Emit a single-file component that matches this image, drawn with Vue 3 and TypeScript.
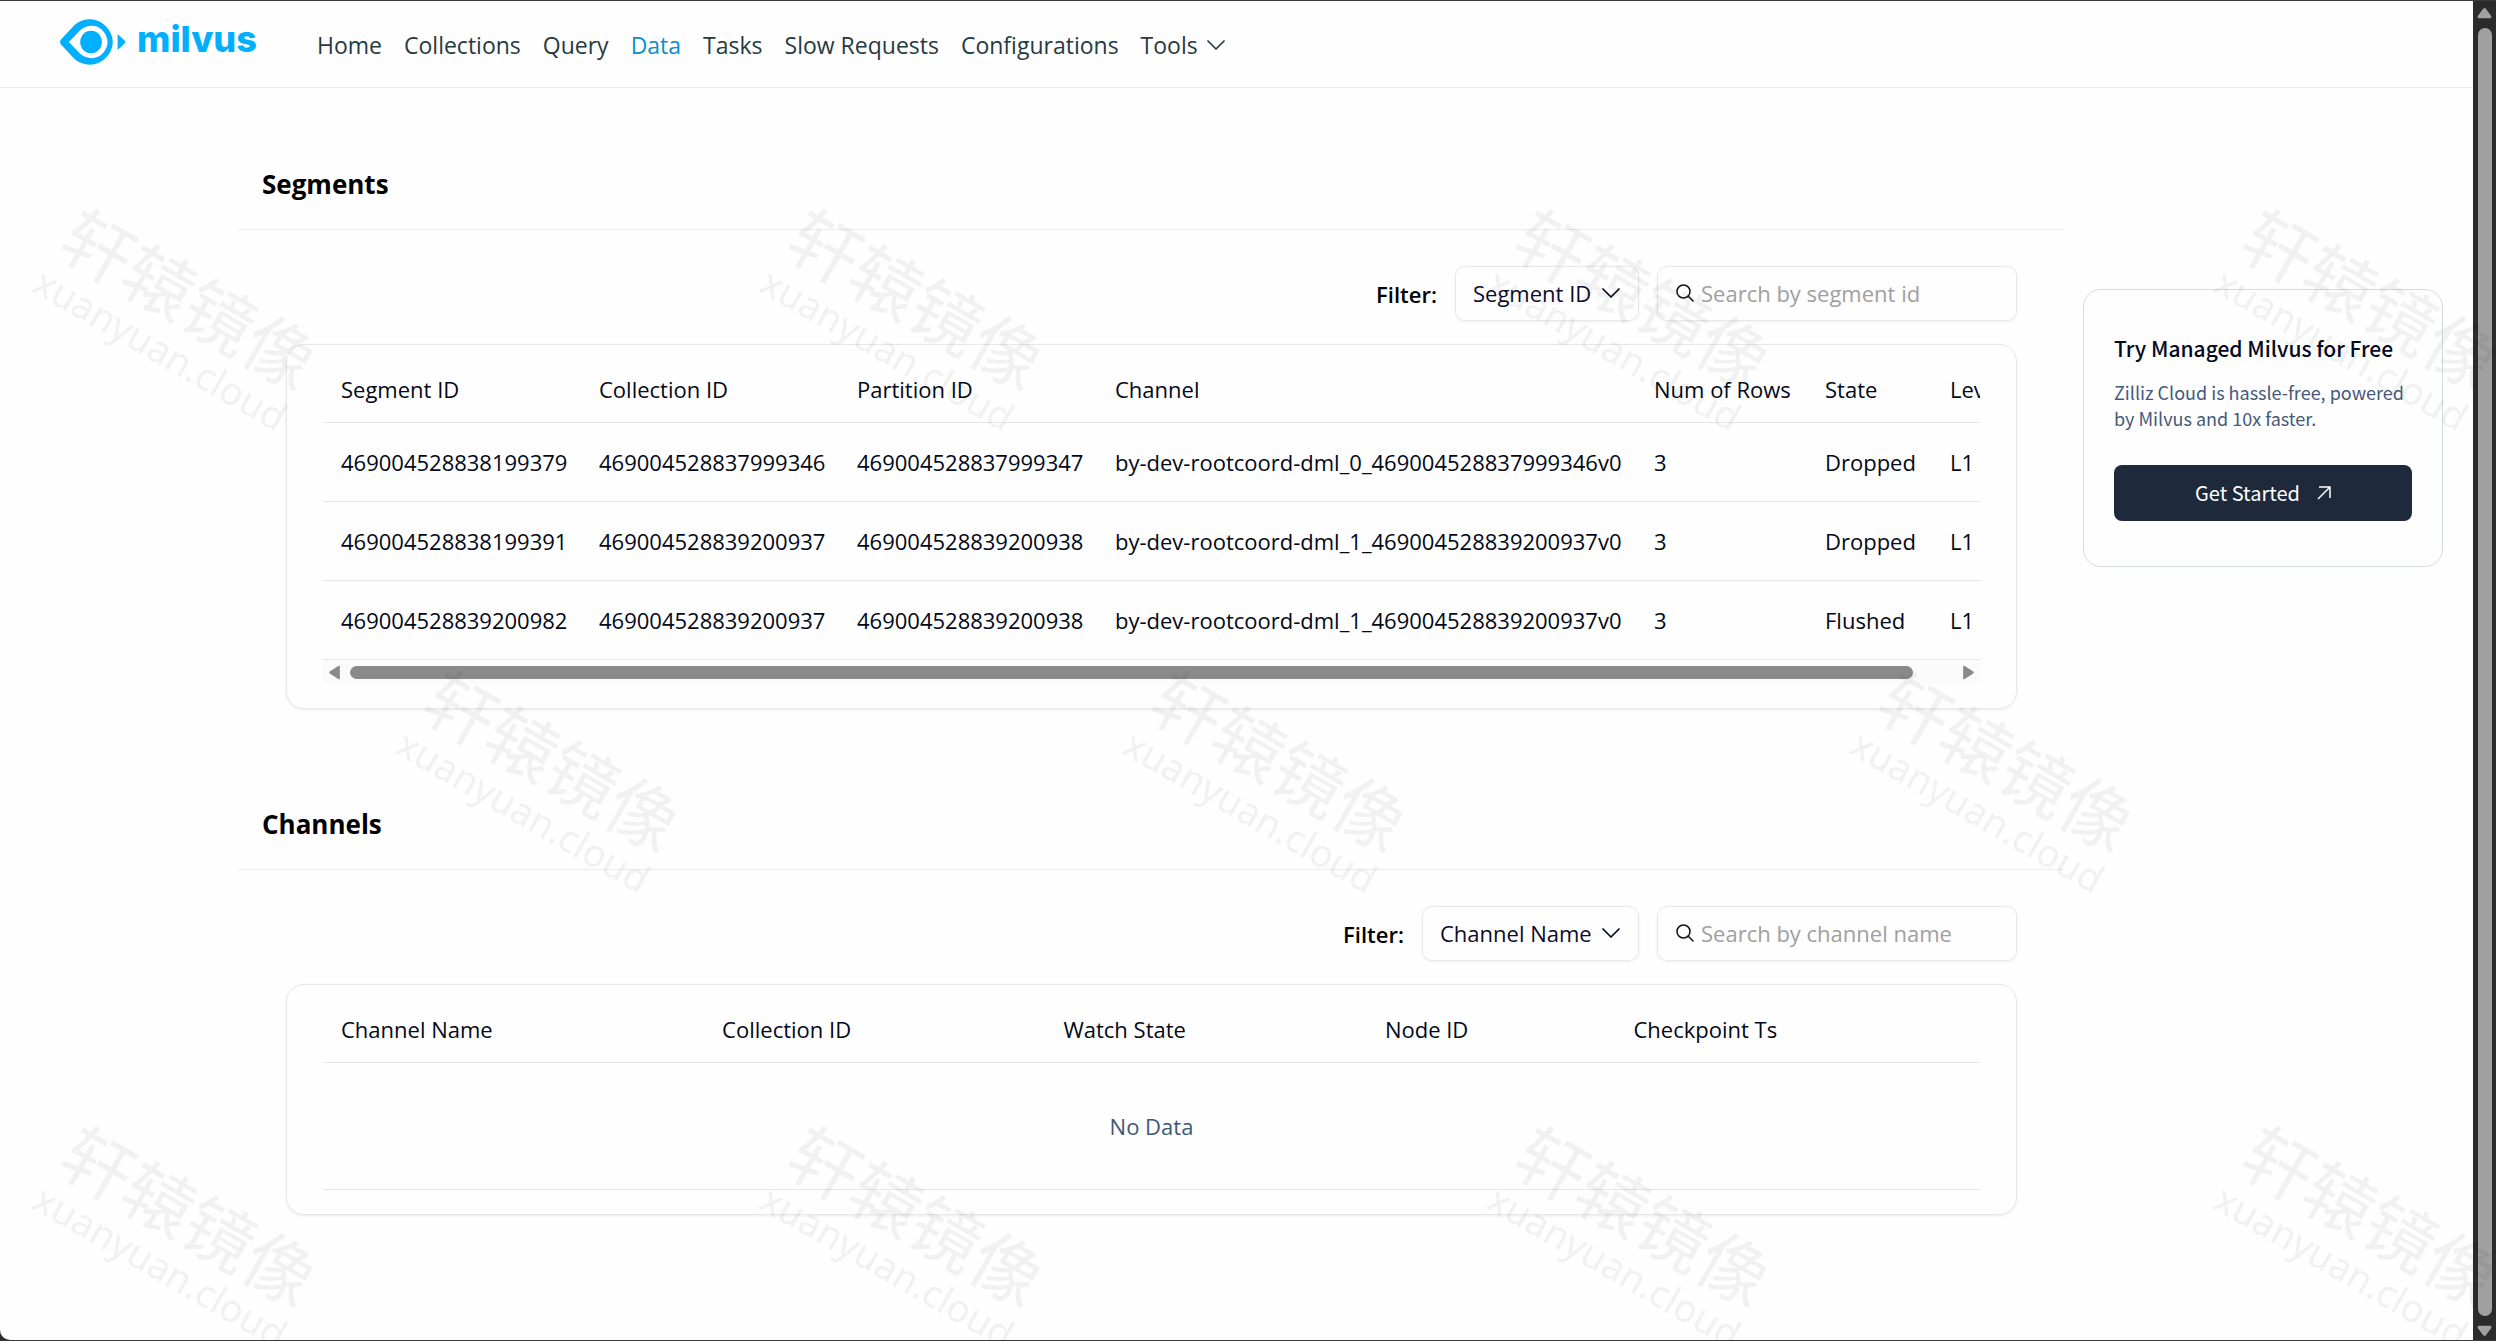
<script setup lang="ts">
interface NavItem {
  label: string
  active?: boolean
}

interface Segment {
  id: string
  collection: string
  partition: string
  channel: string
  rows: number
  state: string
  level: string
}

const navItems: NavItem[] = [
  { label: 'Home' },
  { label: 'Collections' },
  { label: 'Query' },
  { label: 'Data', active: true },
  { label: 'Tasks' },
  { label: 'Slow Requests' },
  { label: 'Configurations' },
]

const segmentColumns: string[] = [
  'Segment ID',
  'Collection ID',
  'Partition ID',
  'Channel',
  'Num of Rows',
  'State',
  'Level',
]

const segments: Segment[] = [
  {
    id: '469004528838199379',
    collection: '469004528837999346',
    partition: '469004528837999347',
    channel: 'by-dev-rootcoord-dml_0_469004528837999346v0',
    rows: 3,
    state: 'Dropped',
    level: 'L1',
  },
  {
    id: '469004528838199391',
    collection: '469004528839200937',
    partition: '469004528839200938',
    channel: 'by-dev-rootcoord-dml_1_469004528839200937v0',
    rows: 3,
    state: 'Dropped',
    level: 'L1',
  },
  {
    id: '469004528839200982',
    collection: '469004528839200937',
    partition: '469004528839200938',
    channel: 'by-dev-rootcoord-dml_1_469004528839200937v0',
    rows: 3,
    state: 'Flushed',
    level: 'L1',
  },
]

const channelColumns: string[] = [
  'Channel Name',
  'Collection ID',
  'Watch State',
  'Node ID',
  'Checkpoint Ts',
]
</script>

<template>
  <div class="window">
    <div class="page">
      <header class="topbar">
        <a class="logo" href="#">
          <svg class="logo-mark" viewBox="0 0 68 46" aria-hidden="true">
            <path
              fill="#00b0ff"
              fill-rule="evenodd"
              d="M1 20.500 L15 5.500 C25-2.500 38-1.500 46 6.500 C56 16 56 30 46 39.500 C38 47.500 25 48.500 15 40.500 L1 25.500 C-.3 24-.3 22 1 20.500 Z M9 23 L20 34.500 C27 41 37 41 43 35 C50 28 50 18 43 11 C37 5 27 5 20 11.500 Z"
            />
            <ellipse cx="31.500" cy="23" rx="11" ry="11.500" fill="#00b0ff" />
            <path d="M58.500 15 L66 22 Q67 23 66 24 L58.500 31 Z" fill="#00b0ff" />
          </svg>
          <span class="logo-text">milvus</span>
        </a>
        <nav class="nav">
          <a
            v-for="item in navItems"
            :key="item.label"
            href="#"
            class="nav-link"
            :class="{ active: item.active }"
            >{{ item.label }}</a
          >
          <button type="button" class="nav-link nav-menu">
            Tools
            <svg class="chevron" viewBox="0 0 18 10" aria-hidden="true">
              <path d="M1 1 L9 9 L17 1" />
            </svg>
          </button>
        </nav>
      </header>

      <div class="layout">
        <main class="main">
          <section class="section">
            <h2 class="section-title">Segments</h2>
            <div class="section-body">
              <div class="filters">
                <label class="filter-label" for="segment-field">Filter:</label>
                <div class="select-box">
                  <select id="segment-field">
                    <option>Segment ID</option>
                  </select>
                  <svg class="chevron" viewBox="0 0 18 10" aria-hidden="true">
                    <path d="M1 1 L9 9 L17 1" />
                  </svg>
                </div>
                <label class="search-box">
                  <svg class="search-icon" viewBox="0 0 18 18" aria-hidden="true">
                    <circle cx="7.500" cy="7.500" r="6.500" />
                    <path d="M12.300 12.300 L17 17" />
                  </svg>
                  <input type="text" placeholder="Search by segment id" />
                </label>
              </div>

              <div class="card">
                <div class="table-scroll">
                  <table class="table segments-table">
                    <colgroup>
                      <col class="w-id" />
                      <col class="w-id" />
                      <col class="w-id" />
                      <col class="w-channel" />
                      <col class="w-rows" />
                      <col class="w-state" />
                      <col class="w-level" />
                    </colgroup>
                    <thead>
                      <tr>
                        <th v-for="column in segmentColumns" :key="column" scope="col">
                          {{ column }}
                        </th>
                      </tr>
                    </thead>
                    <tbody>
                      <tr v-for="segment in segments" :key="segment.id">
                        <td>{{ segment.id }}</td>
                        <td>{{ segment.collection }}</td>
                        <td>{{ segment.partition }}</td>
                        <td>{{ segment.channel }}</td>
                        <td>{{ segment.rows }}</td>
                        <td>{{ segment.state }}</td>
                        <td>{{ segment.level }}</td>
                      </tr>
                    </tbody>
                  </table>
                </div>
                <div class="hscroll" aria-hidden="true">
                  <svg class="hscroll-arrow" viewBox="0 0 12 14">
                    <path d="M11 1.500 V12.500 Q11 14 9.500 13 L1.500 8 Q.5 7 1.500 6 L9.500 1 Q11 0 11 1.500 Z" />
                  </svg>
                  <div class="hscroll-track"><div class="hscroll-thumb"></div></div>
                  <svg class="hscroll-arrow" viewBox="0 0 12 14">
                    <path d="M1 1.500 V12.500 Q1 14 2.500 13 L10.500 8 Q11.500 7 10.500 6 L2.500 1 Q1 0 1 1.500 Z" />
                  </svg>
                </div>
              </div>
            </div>
          </section>

          <section class="section">
            <h2 class="section-title">Channels</h2>
            <div class="section-body">
              <div class="filters">
                <label class="filter-label" for="channel-field">Filter:</label>
                <div class="select-box">
                  <select id="channel-field">
                    <option>Channel Name</option>
                  </select>
                  <svg class="chevron" viewBox="0 0 18 10" aria-hidden="true">
                    <path d="M1 1 L9 9 L17 1" />
                  </svg>
                </div>
                <label class="search-box">
                  <svg class="search-icon" viewBox="0 0 18 18" aria-hidden="true">
                    <circle cx="7.500" cy="7.500" r="6.500" />
                    <path d="M12.300 12.300 L17 17" />
                  </svg>
                  <input type="text" placeholder="Search by channel name" />
                </label>
              </div>

              <div class="card">
                <table class="table channels-table">
                  <colgroup>
                    <col class="c-name" />
                    <col class="c-collection" />
                    <col class="c-watch" />
                    <col class="c-node" />
                    <col />
                  </colgroup>
                  <thead>
                    <tr>
                      <th v-for="column in channelColumns" :key="column" scope="col">
                        {{ column }}
                      </th>
                    </tr>
                  </thead>
                  <tbody>
                    <tr>
                      <td class="empty" :colspan="channelColumns.length">No Data</td>
                    </tr>
                  </tbody>
                </table>
              </div>
            </div>
          </section>
        </main>

        <aside class="promo">
          <h3 class="promo-title">Try Managed Milvus for Free</h3>
          <p class="promo-text">Zilliz Cloud is hassle-free, powered by Milvus and 10x faster.</p>
          <a class="promo-button" href="#">
            Get Started
            <svg class="arrow-icon" viewBox="0 0 14 14" aria-hidden="true">
              <path d="M1 13 L13 1 M2 1 H13 V12" />
            </svg>
          </a>
        </aside>
      </div>
    </div>

    <div class="vscroll" aria-hidden="true">
      <svg class="vscroll-arrow" viewBox="0 0 16 12">
        <path d="M6.500 1.500 Q8 0 9.500 1.500 L15 9 Q16 11.500 14 11.500 H2 Q0 11.500 1 9 Z" />
      </svg>
      <div class="vscroll-thumb"></div>
      <svg class="vscroll-arrow" viewBox="0 0 16 12">
        <path d="M6.500 10.500 Q8 12 9.500 10.500 L15 3 Q16 .5 14 .5 H2 Q0 .5 1 3 Z" />
      </svg>
    </div>

    <svg class="watermark" aria-hidden="true">
      <defs>
        <pattern id="stamp" width="727" height="917" patternUnits="userSpaceOnUse">
          <g transform="translate(189 299) rotate(30)">
            <text class="stamp-cjk" y="26">轩辕镜像</text>
            <text class="stamp-url" y="71">xuanyuan.cloud</text>
          </g>
          <g transform="translate(552 761) rotate(30)">
            <text class="stamp-cjk" y="26">轩辕镜像</text>
            <text class="stamp-url" y="71">xuanyuan.cloud</text>
          </g>
        </pattern>
      </defs>
      <rect width="100%" height="100%" fill="url(#stamp)" />
    </svg>
  </div>
</template>

<style>
body {
  margin: 0;
  background: #2b2b2b;
}
</style>

<style scoped>
.window {
  position: relative;
  display: flex;
  box-sizing: border-box;
  min-height: 100vh;
  border-top: 1px solid #3a383c;
  border-bottom: 1px solid #3a383c;
  background: #2b2b2b;
  color: #020817;
  font-family: 'Open Sans', 'Noto Sans', sans-serif;
  font-size: 22px;
  line-height: 32px;
  overflow: hidden;
}

.page {
  flex: 1;
  min-width: 0;
  background: #fefefe;
  border-bottom-left-radius: 10px;
}

.topbar {
  display: flex;
  align-items: center;
  box-sizing: border-box;
  height: 87px;
  padding: 0 60px;
  border-bottom: 1px solid #ebebeb;
}

.logo {
  display: flex;
  align-items: center;
  gap: 10px;
  width: 257px;
  height: 46px;
  margin-bottom: 4px;
  text-decoration: none;
}

.logo-mark {
  width: 67px;
  height: 46px;
}

.logo-text {
  margin-bottom: 6px;
  color: #00b0ff;
  font-family: Inter, 'Open Sans', sans-serif;
  font-size: 36px;
  font-weight: 800;
  line-height: 40px;
}

.nav {
  display: flex;
  align-items: center;
  gap: 22px;
  padding-top: 2px;
  font-size: 23px;
}

.nav-link {
  color: #263a3f;
  text-decoration: none;
  white-space: nowrap;
}

.nav-link.active {
  color: #0c8ec9;
}

.nav-menu {
  display: flex;
  align-items: center;
  gap: 9px;
  padding: 0;
  border: 0;
  background: none;
  font: inherit;
  line-height: 32px;
}

.chevron {
  width: 18px;
  height: 10px;
  flex: none;
  fill: none;
  stroke: currentColor;
  stroke-width: 1.700;
  stroke-linecap: round;
  stroke-linejoin: round;
}

.layout {
  display: flex;
  align-items: flex-start;
  gap: 20px;
  padding: 57px 30px 0 238px;
}

.main {
  flex: 1;
  min-width: 0;
}

.section {
  margin-bottom: 76px;
}

.section-title {
  box-sizing: border-box;
  height: 85px;
  margin: 0;
  padding: 19px 24px 25px;
  border-bottom: 1px solid #ebebeb;
  color: #000;
  font-size: 26px;
  font-weight: 700;
  line-height: 40px;
}

.section-body {
  padding: 36px 46px 0 48px;
}

.filters {
  display: flex;
  align-items: center;
  justify-content: flex-end;
  gap: 18px;
  height: 55px;
  margin-bottom: 23px;
}

.filter-label {
  color: #000;
  font-weight: 600;
}

.select-box,
.search-box {
  display: flex;
  align-items: center;
  box-sizing: border-box;
  height: 55px;
  padding-bottom: 2px;
  border: 1px solid #e5e8ea;
  border-radius: 10px;
  box-shadow: 0 1px 3px rgba(0, 0, 0, 0.06);
}

.select-box {
  gap: 10px;
  padding-right: 18px;
  padding-left: 17px;
}

.select-box select {
  padding: 0;
  border: 0;
  outline: 0;
  background: none;
  color: #0b0b2a;
  font: inherit;
  line-height: 32px;
  appearance: none;
}

.search-box {
  gap: 7px;
  width: 360px;
  padding-right: 18px;
  padding-left: 18px;
}

.search-icon {
  width: 18px;
  height: 18px;
  flex: none;
  fill: none;
  stroke: #111;
  stroke-width: 1.500;
  stroke-linecap: round;
}

.search-box input {
  flex: 1;
  min-width: 0;
  padding: 0;
  border: 0;
  outline: 0;
  background: none;
  font: inherit;
  line-height: 32px;
}

.search-box input::placeholder {
  color: #a0a0a0;
  opacity: 1;
}

.card {
  box-sizing: border-box;
  padding: 12px 36px 24px;
  border: 1px solid #e5e8ea;
  border-radius: 18px;
  box-shadow: 0 1px 3px rgba(0, 0, 0, 0.08);
}

.table-scroll {
  overflow: hidden;
}

.table {
  width: 100%;
  border-collapse: separate;
  border-spacing: 0;
  table-layout: fixed;
}

.table th,
.table td {
  box-sizing: border-box;
  height: 79px;
  padding: 0 18px 1px;
  border-bottom: 1px solid #e5e8ea;
  font-weight: 400;
  text-align: left;
  white-space: nowrap;
}

.table th {
  height: 66px;
}

.segments-table {
  width: 1770px;
}

.w-id {
  width: 258px;
}

.w-channel {
  width: 539px;
}

.w-rows {
  width: 171px;
}

.w-state {
  width: 125px;
}

.w-level {
  width: 161px;
}

.c-name {
  width: 23%;
}

.c-collection {
  width: 20.6%;
}

.c-watch {
  width: 19.4%;
}

.c-node {
  width: 15%;
}

.table .empty {
  height: 127px;
  color: #3f5873;
  text-align: center;
}

.hscroll {
  display: flex;
  align-items: center;
  gap: 9px;
  height: 24px;
  padding: 0 5px;
  background: #fbfbfb;
}

.hscroll-arrow {
  width: 13px;
  height: 15px;
  flex: none;
  fill: #8a8a8a;
}

.hscroll-track {
  flex: 1;
}

.hscroll-thumb {
  width: 97.5%;
  height: 13px;
  border-radius: 7px;
  background: #8a8a8a;
}

.promo {
  box-sizing: border-box;
  width: 360px;
  margin-top: 144px;
  padding: 41px 30px 45px;
  border: 1px solid #d5dadb;
  border-radius: 18px;
  font-family: 'Noto Sans CJK SC', sans-serif;
}

.promo-title {
  margin: 0 0 14px;
  color: #02081f;
  font-size: 21px;
  font-weight: 500;
  line-height: 34px;
}

.promo-text {
  margin: 0 0 34px;
  color: #45597a;
  font-size: 18px;
  line-height: 26px;
}

.promo-button {
  display: flex;
  align-items: center;
  justify-content: center;
  gap: 17px;
  height: 56px;
  border-radius: 8px;
  background: #1e293b;
  color: #fff;
  font-size: 20px;
  text-decoration: none;
}

.arrow-icon {
  width: 14px;
  height: 14px;
  fill: none;
  stroke: #fff;
  stroke-width: 1.500;
}

.vscroll {
  display: flex;
  flex-direction: column;
  align-items: center;
  gap: 9px;
  box-sizing: border-box;
  width: 23px;
  padding: 6px 0 3px;
  background: #2b2b2b;
}

.vscroll-arrow {
  width: 15px;
  height: 12px;
  flex: none;
  fill: #a0a0a0;
}

.vscroll-thumb {
  flex: 1;
  width: 14px;
  border-radius: 7px;
  background: #a0a0a0;
}

.watermark {
  position: absolute;
  inset: 0;
  width: 100%;
  height: 100%;
  pointer-events: none;
}

.watermark text {
  fill: #000;
  fill-opacity: 0.05;
  text-anchor: middle;
}

.stamp-cjk {
  font-family: 'Noto Sans CJK SC', sans-serif;
  font-size: 70px;
}

.stamp-url {
  font-family: 'Noto Sans', sans-serif;
  font-size: 38px;
}
</style>
